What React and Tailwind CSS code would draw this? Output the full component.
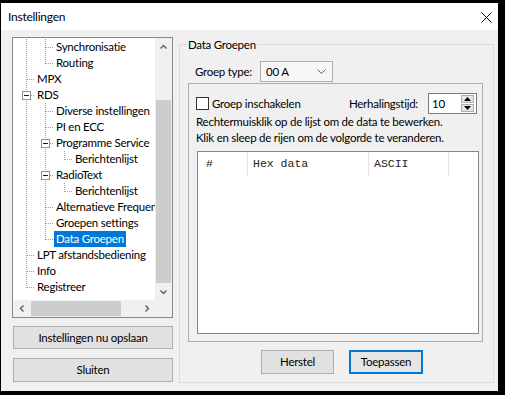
import React from 'react';

const rows = [
  { t: 'Synchronisatie', d: 1, next: true },
  { t: 'Routing', d: 1, next: false },
  { t: 'MPX', d: 0, next: true },
  { t: 'RDS', d: 0, next: true, box: true },
  { t: 'Diverse instellingen', d: 1, next: true },
  { t: 'PI en ECC', d: 1, next: true },
  { t: 'Programme Service', d: 1, next: true, box: true },
  { t: 'Berichtenlijst', d: 2, next: false },
  { t: 'RadioText', d: 1, next: true, box: true },
  { t: 'Berichtenlijst', d: 2, next: false },
  { t: 'Alternatieve Frequenties', d: 1, next: true },
  { t: 'Groepen settings', d: 1, next: true },
  { t: 'Data Groepen', d: 1, next: false, sel: true },
  { t: 'LPT afstandsbediening', d: 0, next: true },
  { t: 'Info', d: 0, next: true },
  { t: 'Registreer', d: 0, next: false },
];

const DOT = '#a0a0a0';

function Cell({ kind, hasNext, box }) {
  return (
    <svg width="19" height="16" className="block shrink-0" shapeRendering="crispEdges">
      {kind === 'anc' && (
        <line x1="10.5" y1="0" x2="10.5" y2="16" stroke={DOT} strokeDasharray="1 1" />
      )}
      {kind === 'own' && (
        <>
          <line x1="10.5" y1="0" x2="10.5" y2={hasNext ? 16 : 9} stroke={DOT} strokeDasharray="1 1" />
          <line x1="11" y1="8.5" x2="19" y2="8.5" stroke={DOT} strokeDasharray="1 1" />
          {box && (
            <>
              <rect x="6.5" y="4.5" width="8" height="8" fill="#fff" stroke="#919191" />
              <line x1="8" y1="8.5" x2="13" y2="8.5" stroke="#1a1a1a" />
            </>
          )}
        </>
      )}
    </svg>
  );
}

function TreeRow({ r }) {
  const cells = [];
  for (let i = 0; i < r.d; i++) cells.push(<Cell key={i} kind="anc" />);
  cells.push(<Cell key="own" kind="own" hasNext={r.next} box={r.box} />);
  return (
    <div className="flex h-[16px] items-center whitespace-nowrap pl-[3px]">
      {cells}
      <span
        className={
          'h-[16px] px-[2px] leading-[16px] ' + (r.sel ? 'bg-[#0078d7] text-white' : 'text-black')
        }
      >
        {r.t}
      </span>
    </div>
  );
}

function Chevron({ dir }) {
  const pts = {
    up: '0.5,4.5 3.5,1.5 6.5,4.5',
    down: '0.5,1.5 3.5,4.5 6.5,1.5',
    left: '4.5,0.5 1.5,3.5 4.5,6.5',
    right: '1.5,0.5 4.5,3.5 1.5,6.5',
  }[dir];
  const w = dir === 'up' || dir === 'down' ? 7 : 6;
  const h = dir === 'up' || dir === 'down' ? 6 : 7;
  return (
    <svg width={w} height={h} className="block">
      <polyline points={pts} fill="none" stroke="#606060" strokeWidth="1.4" />
    </svg>
  );
}

function Btn({ children, className }) {
  return (
    <div
      className={
        'flex items-center justify-center whitespace-nowrap border border-[#adadad] bg-[#e1e1e1] leading-[16px] text-black ' +
        className
      }
    >
      {children}
    </div>
  );
}

export default function App() {
  return (
    <div className="h-[395px] w-[505px] overflow-hidden bg-black pl-[1px] pt-[3px] font-['Lato',sans-serif] text-[11.5px] tracking-[-0.25px] text-black">
      <div className="flex h-[388px] w-[497px] flex-col">
        {/* title bar */}
        <div className="flex h-[27px] shrink-0 items-center justify-between bg-white pl-[7px] pr-[6px]">
          <span className="text-[12px] leading-[16px]">Instellingen</span>
          <svg width="11" height="11" className="mt-[1px] block">
            <line x1="0.5" y1="0.5" x2="10.5" y2="10.5" stroke="#000" strokeWidth="1" />
            <line x1="10.5" y1="0.5" x2="0.5" y2="10.5" stroke="#000" strokeWidth="1" />
          </svg>
        </div>

        {/* body */}
        <div className="flex flex-1 bg-[#f0f0f0]">
          {/* left column */}
          <div className="flex flex-col pl-[11px] pt-[7px]">
            <div className="flex h-[281px] w-[161px] flex-col border border-[#828790] bg-white">
              <div className="flex h-[262px]">
                <div className="w-[142px] overflow-hidden pt-[1px]">
                  {rows.map((r, i) => (
                    <TreeRow key={i} r={r} />
                  ))}
                </div>
                {/* vertical scrollbar */}
                <div className="flex w-[17px] flex-col bg-[#f0f0f0]">
                  <div className="flex h-[17px] items-center justify-center">
                    <Chevron dir="up" />
                  </div>
                  <div className="flex flex-1 flex-col">
                    <div className="h-[45px]" />
                    <div className="mx-[1px] flex-1 bg-[#cdcdcd]" />
                  </div>
                  <div className="flex h-[17px] items-center justify-center">
                    <Chevron dir="down" />
                  </div>
                </div>
              </div>
              {/* horizontal scrollbar */}
              <div className="flex h-[17px] bg-[#f0f0f0]">
                <div className="flex w-[17px] items-center justify-center">
                  <Chevron dir="left" />
                </div>
                <div className="flex w-[108px] py-[1px]">
                  <div className="ml-[1px] w-[90px] bg-[#cdcdcd]" />
                </div>
                <div className="flex w-[17px] items-center justify-center">
                  <Chevron dir="right" />
                </div>
                <div className="w-[17px] bg-[#f0f0f0]" />
              </div>
            </div>
            <Btn className="ml-[1px] mt-[8px] h-[23px] w-[160px]">Instellingen nu opslaan</Btn>
            <Btn className="ml-[1px] mt-[9px] h-[24px] w-[160px]">Sluiten</Btn>
          </div>

          {/* right column: group box */}
          <div className="ml-[6px] mt-[14px] flex h-[339px] w-[315px] flex-col border border-[#dcdcdc]">
            <div className="-mt-[8px] ml-[7px] w-fit whitespace-nowrap bg-[#f0f0f0] px-[1px] leading-[16px]">
              Data Groepen
            </div>
            <div className="ml-[15px] mt-[8px] flex h-[21px] items-center">
              <span className="w-[65px] whitespace-nowrap leading-[16px]">Groep type:</span>
              <div className="flex h-[21px] w-[73px] items-center justify-between border border-[#adadad] bg-[#f7f7f7] pl-[5px] pr-[6px]">
                <span className="leading-[16px]">00 A</span>
                <svg width="9" height="5" className="block">
                  <polyline points="0.5,0.5 4.5,4.5 8.5,0.5" fill="none" stroke="#606060" strokeWidth="1" />
                </svg>
              </div>
            </div>

            {/* inner box */}
            <div className="ml-[8px] mt-[1px] flex h-[259px] w-[295px] flex-col border border-[#adadad] pl-[7px] pr-[3px]">
              <div className="mt-[9px] flex h-[21px] items-center whitespace-nowrap">
                <div className="h-[13px] w-[13px] border border-[#333333] bg-white" />
                <span className="ml-[3px] leading-[16px]">Groep inschakelen</span>
                <span className="ml-auto leading-[16px]">Herhalingstijd:</span>
                <div className="ml-[10px] mr-[2px] flex h-[21px] w-[49px] items-center border border-[#7a7a7a] bg-white">
                  <span className="ml-[3px] flex-1 leading-[16px]">10</span>
                  <div className="mr-[2px] flex w-[13px] flex-col gap-[1px]">
                    <div className="flex h-[8px] items-center justify-center border border-[#adadad] bg-[#e5e5e5]">
                      <svg width="7" height="4" className="block">
                        <polygon points="0,4 3.5,0 7,4" fill="#000" />
                      </svg>
                    </div>
                    <div className="flex h-[8px] items-center justify-center border border-[#adadad] bg-[#e5e5e5]">
                      <svg width="7" height="4" className="block">
                        <polygon points="0,0 3.5,4 7,0" fill="#000" />
                      </svg>
                    </div>
                  </div>
                </div>
              </div>
              <div className="whitespace-nowrap leading-[16px]">Rechtermuisklik op de lijst om de data te bewerken.</div>
              <div className="whitespace-nowrap leading-[16px]">Klik en sleep de rijen om de volgorde te veranderen.</div>
              <div className="ml-[1px] mt-[5px] h-[183px] w-[282px] border border-[#828790] bg-white">
                <div className="flex h-[24px] font-['Liberation_Mono',monospace] text-[11.5px] tracking-normal text-[#222]">
                  <div className="flex w-[50px] items-center border-r border-[#e5e5e5] pl-[8px]">#</div>
                  <div className="flex w-[121px] items-center border-r border-[#e5e5e5] pl-[5px]">Hex data</div>
                  <div className="flex w-[80px] items-center border-r border-[#e5e5e5] pl-[5px]">ASCII</div>
                </div>
              </div>
            </div>

            <div className="ml-[81px] mt-[8px] flex">
              <Btn className="h-[24px] w-[73px]">Herstel</Btn>
              <Btn className="ml-[15px] h-[24px] w-[74px] !border-2 !border-[#0078d7] !bg-[#e5e5e5]">Toepassen</Btn>
            </div>
          </div>
        </div>
      </div>
    </div>
  );
}
